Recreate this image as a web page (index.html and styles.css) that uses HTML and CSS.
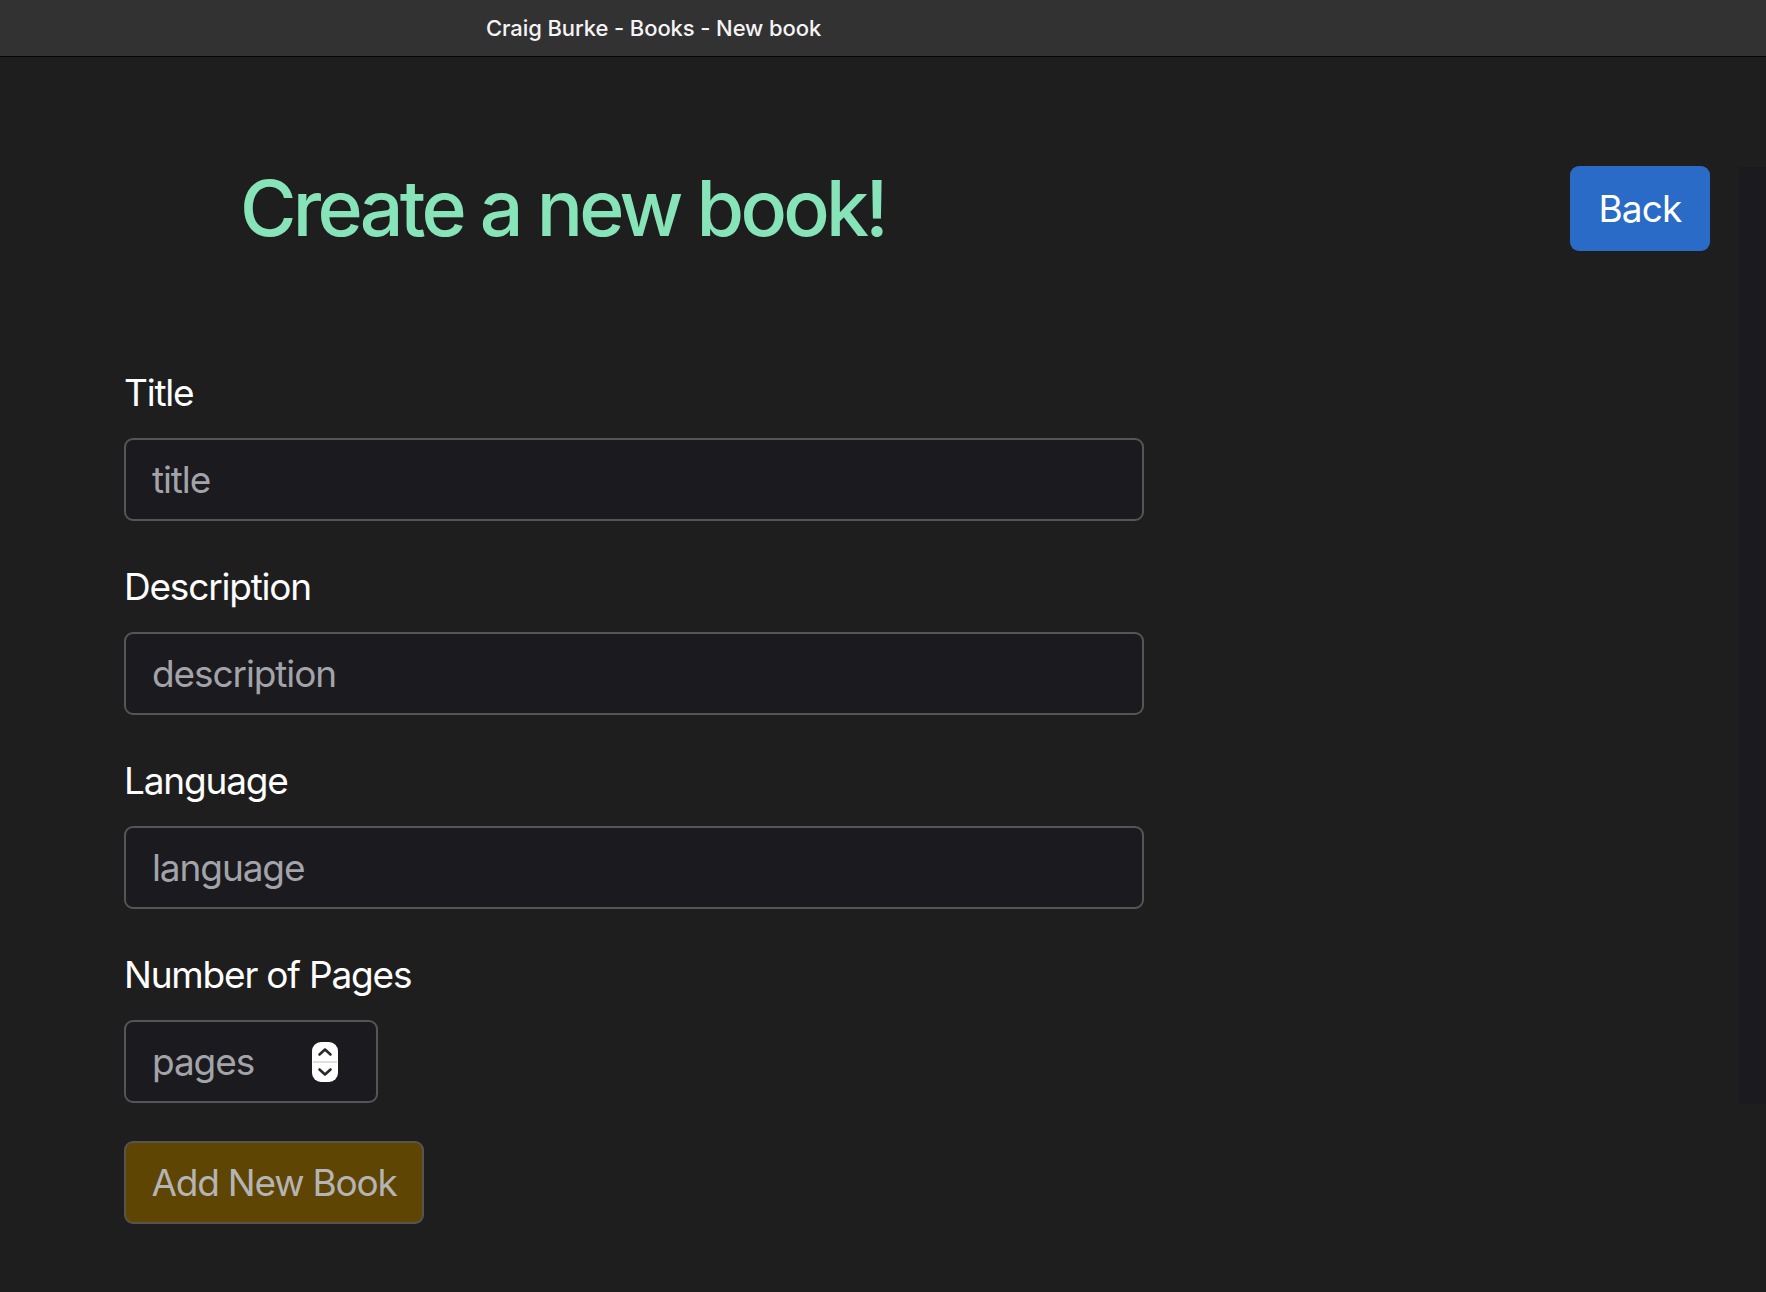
FILE: index.html
```html
<!DOCTYPE html>
<html lang="en">
<head>
<meta charset="utf-8">
<title>Craig Burke - Books - New book</title>
<link rel="stylesheet" href="styles.css">
</head>
<body>
<div class="titlebar"><span class="titlebar-text">Craig Burke - Books - New book</span></div>
<div class="page">
  <main class="content">
    <header class="header">
      <h1 class="heading">Create a new book!</h1>
      <a class="btn-back" href="#">Back</a>
    </header>
    <form class="form">
      <div class="group">
        <label class="label" for="title">Title</label>
        <input class="field" id="title" type="text" placeholder="title">
      </div>
      <div class="group">
        <label class="label" for="description">Description</label>
        <input class="field" id="description" type="text" placeholder="description">
      </div>
      <div class="group">
        <label class="label" for="language">Language</label>
        <input class="field" id="language" type="text" placeholder="language">
      </div>
      <div class="group group-last">
        <label class="label" for="pages">Number of Pages</label>
        <div class="number-field">
          <input class="number-input" id="pages" type="text" placeholder="pages">
          <svg class="spinner" width="26" height="40" viewBox="0 0 26 40" aria-hidden="true">
            <rect x="0" y="0" width="26" height="40" rx="9" fill="#ffffff"/>
            <line x1="1" y1="20" x2="25" y2="20" stroke="#d4d4d4" stroke-width="1.5"/>
            <path d="M7.5 12.5 L13 7.5 L18.5 12.5" fill="none" stroke="#2a2a2a" stroke-width="2.6" stroke-linecap="round" stroke-linejoin="round"/>
            <path d="M7.5 27.5 L13 32.5 L18.5 27.5" fill="none" stroke="#2a2a2a" stroke-width="2.6" stroke-linecap="round" stroke-linejoin="round"/>
          </svg>
        </div>
      </div>
      <button class="btn-add" type="button">Add New Book</button>
    </form>
  </main>
  <div class="gutter"></div>
</div>
</body>
</html>
```
FILE: styles.css
```css
html, body {
  margin: 0;
  padding: 0;
}
body {
  background: #1e1e1e;
  font-family: Inter, "Noto Sans", "Liberation Sans", sans-serif;
  color: #ffffff;
  min-height: 1292px;
}
.titlebar {
  height: 56px;
  background: #323232;
  border-bottom: 1px solid #050505;
  display: flex;
  align-items: center;
  padding-left: 486px;
}
.titlebar-text {
  font-size: 22px;
  font-weight: 500;
  color: #f4f4f4;
  letter-spacing: -0.1px;
}
.page {
  display: flex;
}
.content {
  flex: 1;
  padding-left: 124px;
  padding-right: 28px;
}
.header {
  display: flex;
  justify-content: space-between;
  align-items: center;
  margin-top: 109px;
}
.heading {
  margin: 0 0 0 116px;
  font-size: 77px;
  font-weight: 500;
  letter-spacing: -3.7px;
  color: #87e4b9;
  line-height: 85px;
}
.btn-back {
  display: flex;
  align-items: center;
  justify-content: center;
  width: 140px;
  height: 85px;
  box-sizing: border-box;
  background: #2a6bc8;
  color: #ffffff;
  font-size: 37px;
  letter-spacing: -0.8px;
  text-decoration: none;
  border-radius: 9px;
}
.form {
  margin-top: 119px;
}
.group {
  margin-bottom: 43px;
}
.group-last {
  margin-bottom: 38px;
}
.label {
  display: block;
  font-size: 37px;
  letter-spacing: -1.2px;
  line-height: 45px;
  margin-bottom: 23px;
  color: #ffffff;
}
.field {
  display: block;
  box-sizing: border-box;
  width: 1020px;
  height: 83px;
  padding: 0 26px;
  background: #1b1a1f;
  border: 2px solid #555557;
  border-radius: 9px;
  color: #ffffff;
  font-family: inherit;
  font-size: 37px;
  letter-spacing: -1.1px;
  outline: none;
}
.field::placeholder,
.number-input::placeholder {
  color: #a2a4a9;
}
.number-field {
  display: flex;
  align-items: center;
  box-sizing: border-box;
  width: 254px;
  height: 83px;
  padding: 0 38px 0 26px;
  background: #1b1a1f;
  border: 2px solid #555557;
  border-radius: 9px;
}
.number-input {
  flex: 1;
  min-width: 0;
  border: 0;
  background: transparent;
  padding: 0;
  color: #ffffff;
  font-family: inherit;
  font-size: 37px;
  letter-spacing: -1.1px;
  outline: none;
}
.spinner {
  flex: none;
  display: block;
}
.btn-add {
  display: block;
  box-sizing: border-box;
  width: 300px;
  height: 83px;
  padding: 0;
  background: #5f4504;
  border: 2px solid #58544d;
  border-radius: 9px;
  color: #b4b4b4;
  font-family: inherit;
  font-size: 37px;
  letter-spacing: -1.2px;
}
.gutter {
  flex: none;
  width: 28px;
  height: 937px;
  margin-top: 110px;
  background: #1b1b1f;
}
```
